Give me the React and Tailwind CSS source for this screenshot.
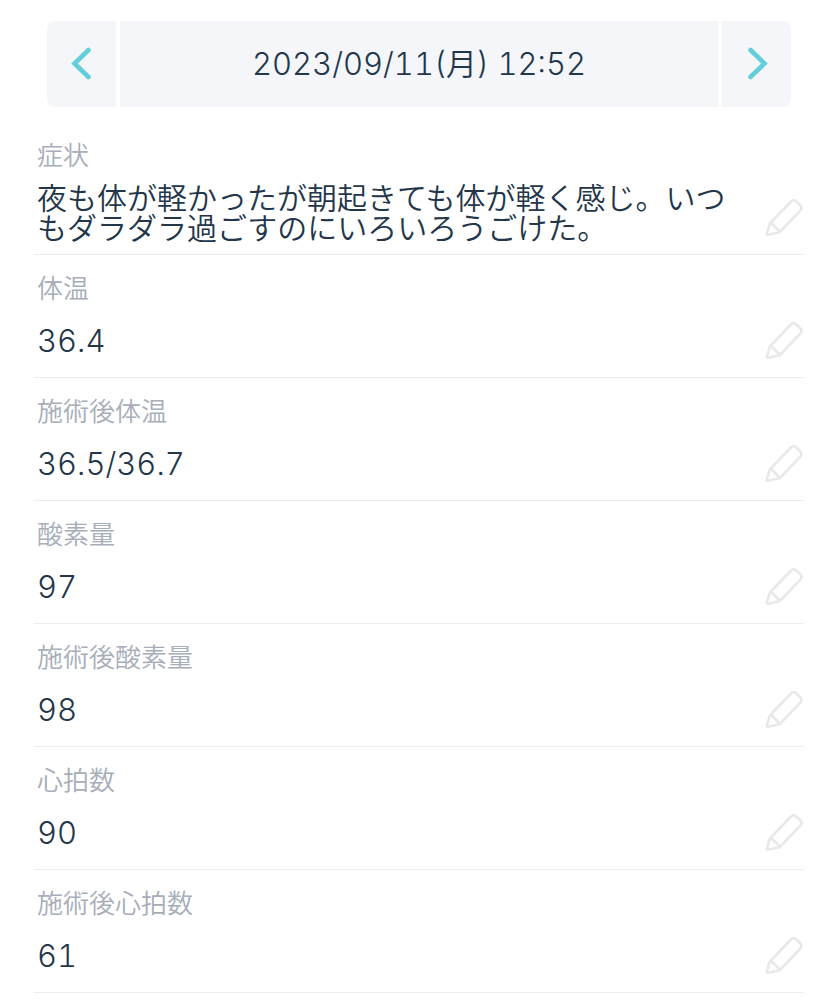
import clsx from 'clsx';

const records = [
  {
    id: 'symptom',
    label: '症状',
    value: '夜も体が軽かったが朝起きても体が軽く感じ。いつもダラダラ過ごすのにいろいろうごけた。',
    long: true,
  },
  { id: 'temp', label: '体温', value: '36.4' },
  { id: 'temp-after', label: '施術後体温', value: '36.5/36.7' },
  { id: 'oxygen', label: '酸素量', value: '97' },
  { id: 'oxygen-after', label: '施術後酸素量', value: '98' },
  { id: 'pulse', label: '心拍数', value: '90' },
  { id: 'pulse-after', label: '施術後心拍数', value: '61' },
];

const Chevron = ({ path }) => (
  <svg width="24" height="34" viewBox="0 0 24 34" fill="none" aria-hidden="true">
    <path d={path} stroke="#63cfdb" strokeWidth="4.6" strokeLinecap="round" strokeLinejoin="miter" />
  </svg>
);

const PencilIcon = () => (
  <svg width="40" height="40" viewBox="0 0 40 40" fill="none" aria-hidden="true">
    <path
      d="M6.8 24.5 27 3.5Q29.5 1 32 3.3L36.5 7.6Q38.6 10 36.3 12.6L16.6 33.3Q15.8 34.2 14.4 34.5L4.2 36.8Q2.4 37.2 2.9 35.4L5.6 26.4Q6 25.2 6.8 24.5ZM6.8 24.5 15.8 33.8"
      stroke="#e9e9e9"
      strokeWidth="2.7"
      strokeLinejoin="round"
    />
  </svg>
);

const DateNav = () => (
  <nav className="mx-[47px] flex h-[86px] gap-1 overflow-hidden rounded-lg">
    <button type="button" aria-label="前の記録" className="flex w-[69px] items-center justify-center bg-[#f4f6fa]">
      <Chevron path="M18.5 3 4.5 16.5 18.5 30" />
    </button>
    <h1 className="flex flex-1 items-center justify-center bg-[#f4f6fa] text-[31px] font-[350] tabular-nums">
      2023/09/11(月) 12:52
    </h1>
    <button type="button" aria-label="次の記録" className="flex w-[69px] items-center justify-center bg-[#f4f6fa]">
      <Chevron path="M5.5 3 19.5 16.5 5.5 30" />
    </button>
  </nav>
);

const RecordRow = ({ label, value, long }) => (
  <div className="flex items-end border-b border-[#ededed] pt-[18px]">
    <dl className="flex-1 pr-5 pl-[3px]">
      <dt className="text-[26px] leading-8 font-[350] text-[#a7aeba]">{label}</dt>
      <dd
        className={clsx(
          'flex min-h-[72px] items-center py-[11px] leading-[30px] font-[350]',
          long ? 'text-[30px]' : 'text-[31px] tabular-nums'
        )}
      >
        {value}
      </dd>
    </dl>
    <button type="button" aria-label={`${label}を編集`} className="flex h-[72px] items-center">
      <PencilIcon />
    </button>
  </div>
);

const App = () => (
  <main className="bg-white pt-[21px] font-['Inter','Noto_Sans_CJK_JP',sans-serif] text-[#23364a]" lang="ja">
    <DateNav />
    <section className="mx-[34px] mt-[15px]">
      {records.map((r) => (
        <RecordRow key={r.id} label={r.label} value={r.value} long={r.long} />
      ))}
    </section>
  </main>
);

export default App;
